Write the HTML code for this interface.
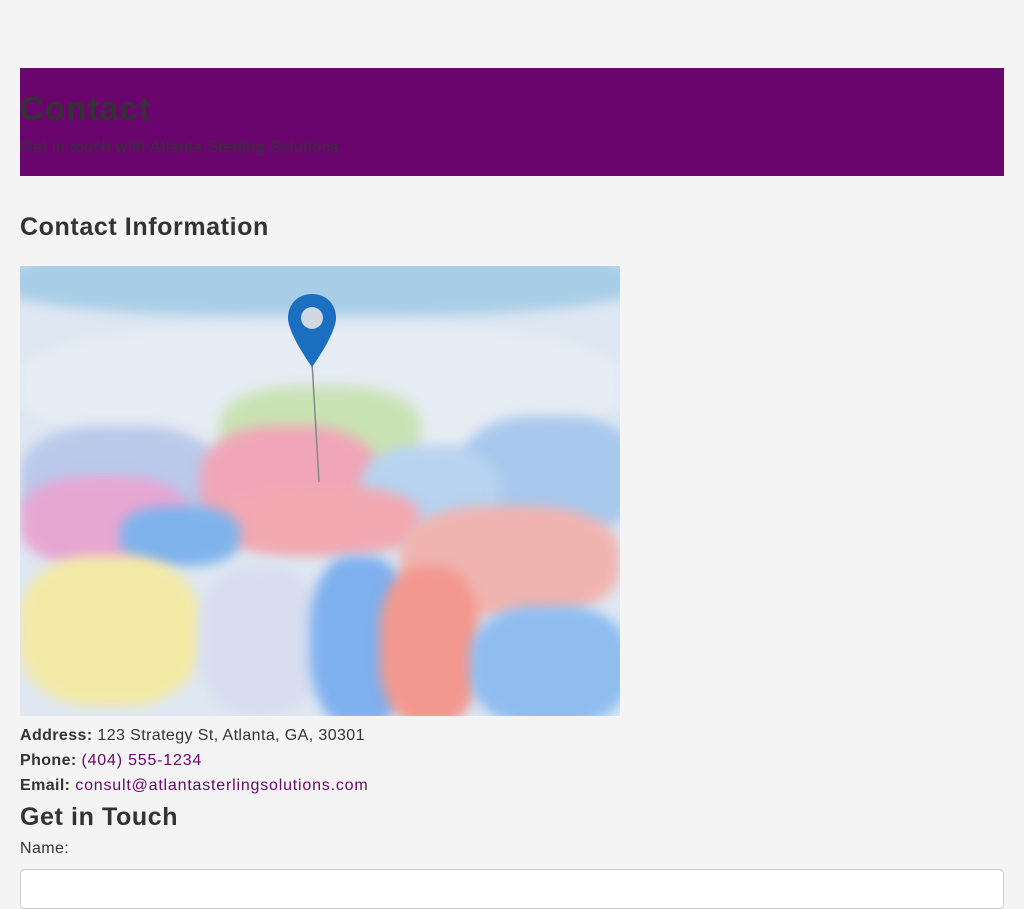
<!DOCTYPE html>
<html><head><meta charset="utf-8"><style>
body{margin:0;background:#f4f4f4;font-family:"Liberation Sans",sans-serif;color:#333;}
header{position:absolute;left:20px;top:68px;width:984px;height:108px;background:#6a056e;}
.h1{position:absolute;left:20px;top:90px;font-size:33px;font-weight:bold;color:#333;margin:0;letter-spacing:1.2px}
.sub{position:absolute;left:20px;top:139px;font-size:16px;color:#333;letter-spacing:0.4px}
.h2{position:absolute;left:20px;font-size:25px;font-weight:bold;margin:0;letter-spacing:0.6px}
.map{position:absolute;left:20px;top:266px;width:600px;height:450px;overflow:hidden;background:#dfe8f2;}
.b{position:absolute;border-radius:40%;filter:blur(6px);}
.line{position:absolute;left:20px;font-size:16px;letter-spacing:0.4px}
a{color:#6a056e;text-decoration:none;letter-spacing:0.8px}
input{position:absolute;left:20px;top:869px;width:984px;height:40px;border:1px solid #ccc;border-radius:4px;background:#fff;box-sizing:border-box;}
</style></head><body>
<header></header>
<div class="h1">Contact</div>
<div class="sub">Get in touch with Atlanta Sterling Solutions.</div>
<div class="h2" style="top:213px">Contact Information</div>
<div class="map">
<div class="b" style="left:-20px;top:-20px;width:640px;height:70px;background:#a8cde6"></div>
<div class="b" style="left:0;top:60px;width:600px;height:120px;background:#e6ecf3"></div>
<div class="b" style="left:200px;top:120px;width:200px;height:90px;background:#c9e2b4"></div>
<div class="b" style="left:440px;top:150px;width:180px;height:120px;background:#a9c8ee"></div>
<div class="b" style="left:0;top:160px;width:200px;height:110px;background:#b9c9ea"></div>
<div class="b" style="left:180px;top:160px;width:180px;height:120px;background:#f0a6b8"></div>
<div class="b" style="left:0;top:210px;width:170px;height:90px;background:#e7a7d3"></div>
<div class="b" style="left:340px;top:180px;width:140px;height:100px;background:#b7d3f0"></div>
<div class="b" style="left:200px;top:220px;width:200px;height:70px;background:#f2a9b2"></div>
<div class="b" style="left:380px;top:240px;width:220px;height:110px;background:#f0b4b0"></div>
<div class="b" style="left:100px;top:240px;width:120px;height:60px;background:#7fb3ec"></div>
<div class="b" style="left:0;top:290px;width:180px;height:150px;background:#f3e9a6"></div>
<div class="b" style="left:180px;top:300px;width:120px;height:150px;background:#d8ddf0"></div>
<div class="b" style="left:290px;top:290px;width:100px;height:170px;background:#7fb0ef"></div>
<div class="b" style="left:360px;top:300px;width:100px;height:160px;background:#f3988e"></div>
<div class="b" style="left:450px;top:340px;width:160px;height:120px;background:#8fbdf0"></div>
<svg style="position:absolute;left:266px;top:26px" width="52" height="190"><line x1="26" y1="70" x2="33" y2="190" stroke="#888" stroke-width="1.5"/><path d="M26 2C12 2 2 12 2 26C2 42 26 75 26 75C26 75 50 42 50 26C50 12 40 2 26 2Z" fill="#1a6fc0"/><circle cx="26" cy="26" r="11" fill="#cfd8e2"/></svg>
</div>
<div class="line" style="top:727px"><b>Address:</b> 123 Strategy St, Atlanta, GA, 30301</div>
<div class="line" style="top:752px"><b>Phone:</b> <a>(404) 555-1234</a></div>
<div class="line" style="top:777px"><b>Email:</b> <a>consult@atlantasterlingsolutions.com</a></div>
<div class="h2" style="top:803px">Get in Touch</div>
<div class="line" style="top:840px">Name:</div>
<input>
</body></html>
